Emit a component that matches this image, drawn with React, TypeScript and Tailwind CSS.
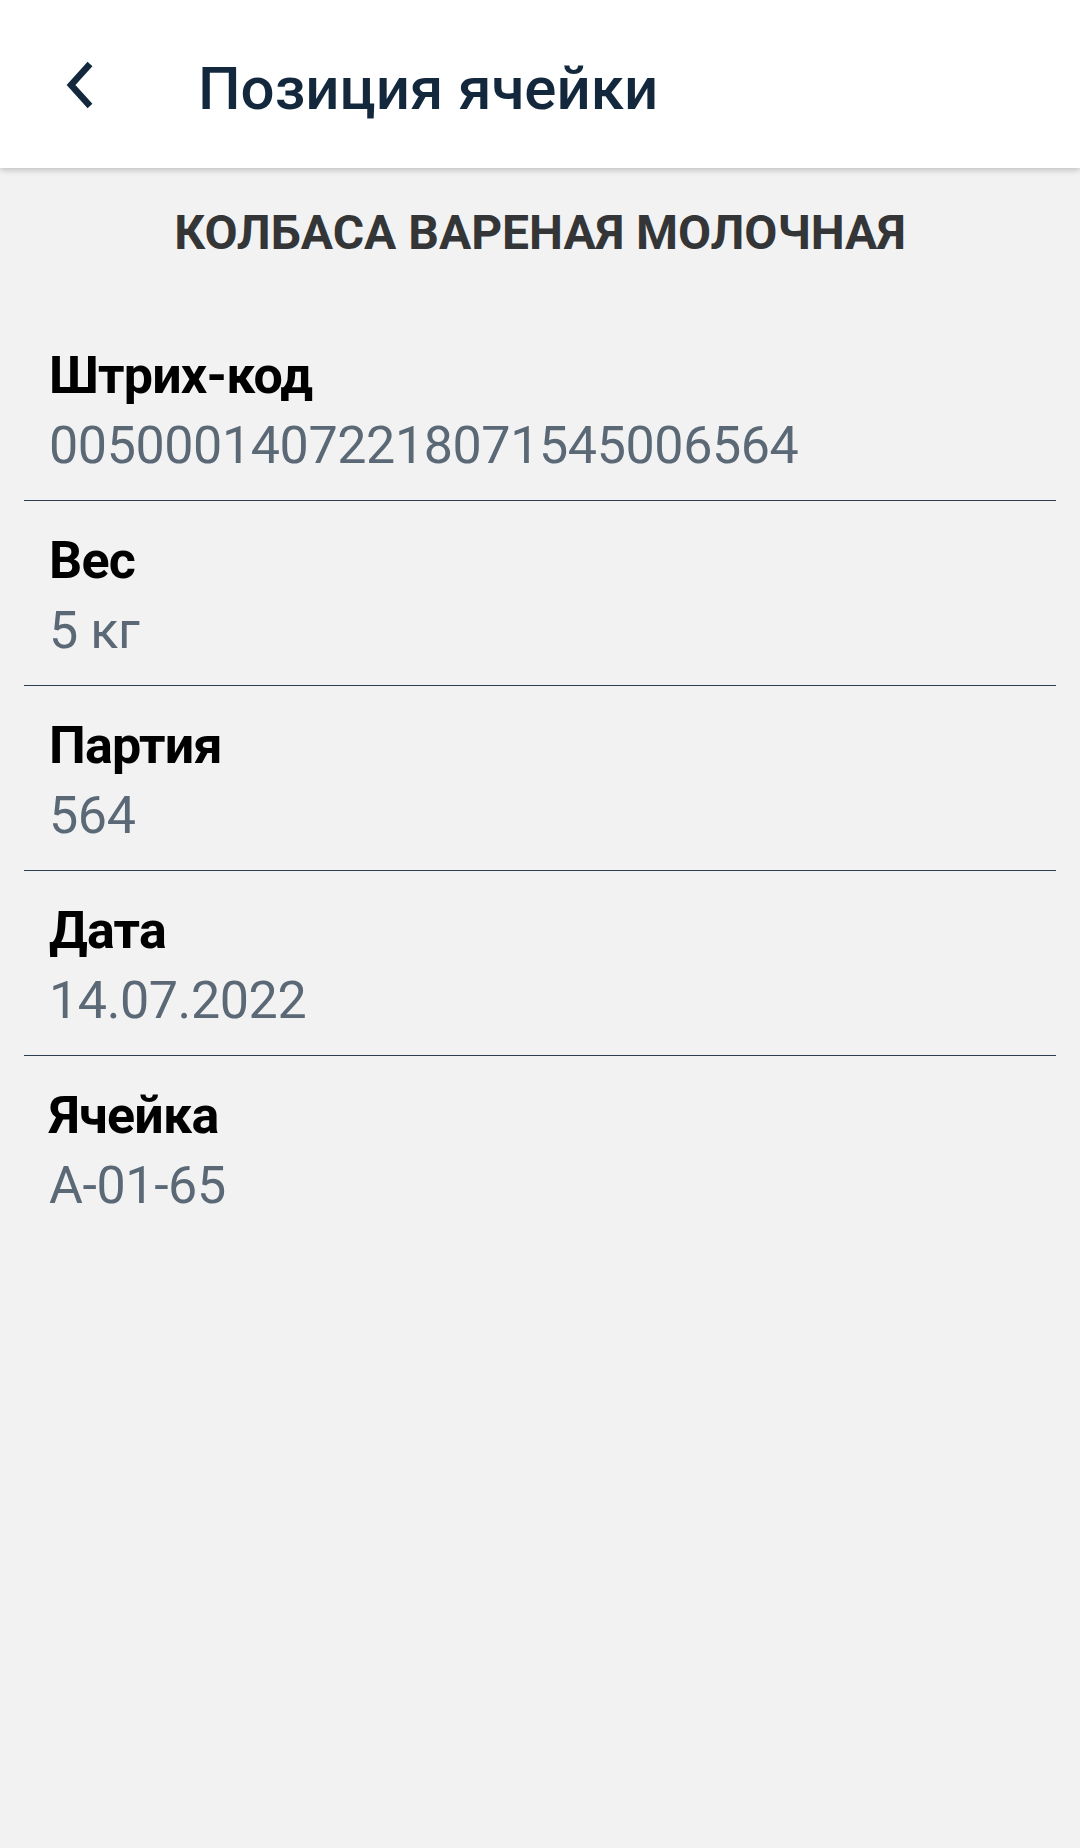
import React from "react";

/* Экран «Позиция ячейки»: карточка товара со списком полей */
const FIELDS: { label: string; value: string }[] = [
  { label: "Штрих-код", value: "0050001407221807154500656" + "4" },
  { label: "Вес", value: "5 кг" },
  { label: "Партия", value: "564" },
  { label: "Дата", value: "14.07.2022" },
  { label: "Ячейка", value: "A-01-65" },
];

function BackIcon() {
  return (
    <svg viewBox="0 0 40 60" className="ml-[59px] mt-[55px] h-[60px] w-[40px] shrink-0">
      <polyline points="31,9 12,30 31,51" fill="none" stroke="#13283c" strokeWidth="6.5" />
    </svg>
  );
}

export default function App() {
  return (
    <div className="flex min-h-[1848px] w-full flex-col bg-[#f2f2f2] font-['Roboto',sans-serif]">
      <header className="relative z-10 flex h-[168px] items-start bg-white shadow-[0_2px_6px_rgba(0,0,0,0.22)]">
        <BackIcon />
        <h1 className="ml-[99px] mt-[57px] text-[60px] font-medium leading-[64px] text-[#13283c]">Позиция ячейки</h1>
      </header>

      <p className="mt-[37px] mb-[55px] text-center text-[48px] font-bold leading-[56px] text-[#333537]">
        КОЛБАСА ВАРЕНАЯ МОЛОЧНАЯ
      </p>

      <div className="flex flex-col px-[24px]">
        {FIELDS.map((f, i) => (
          <div
            key={f.label}
            className={`flex flex-col gap-[6px] pl-[25px] pt-[28px] pb-[22px] ${i < FIELDS.length - 1 ? "border-b border-[#2c3e50]" : ""}`}
          >
            <span className="text-[52px] font-bold leading-[64px] tracking-[-0.8px] text-black">{f.label}</span>
            <span className="text-[52px] leading-[64px] tracking-[-0.4px] text-[#5b6976]">{f.value}</span>
          </div>
        ))}
      </div>
    </div>
  );
}
